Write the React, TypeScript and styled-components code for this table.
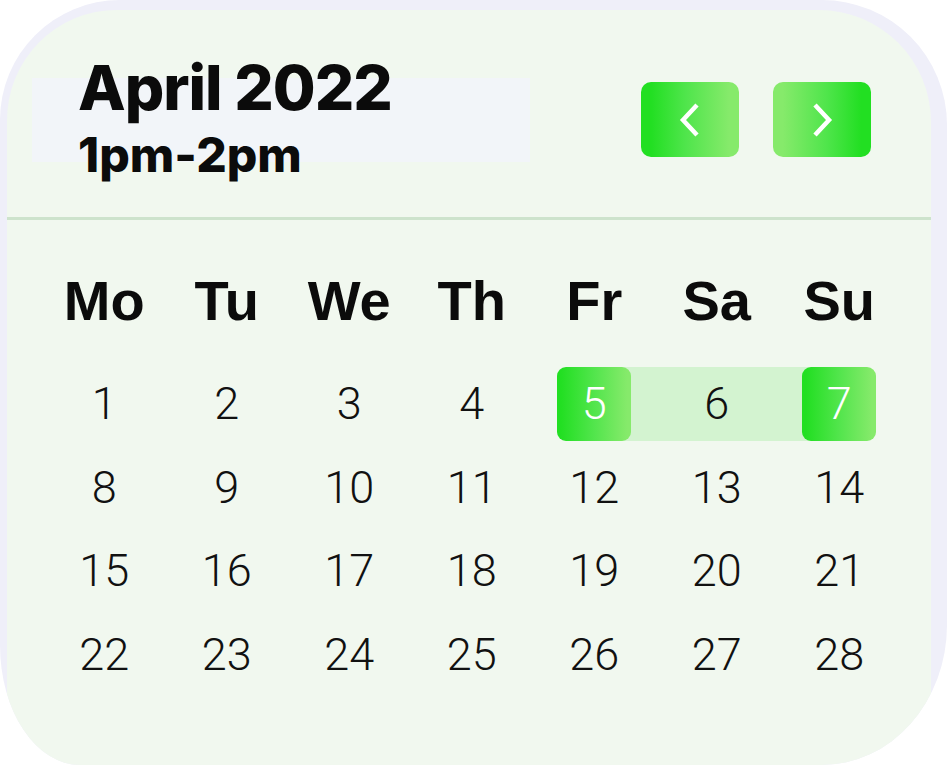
import React from "react";
import styled, { createGlobalStyle } from "styled-components";

const GlobalStyle = createGlobalStyle`
  html, body { margin: 0; padding: 0; background: #ffffff; }
  * { box-sizing: border-box; }
`;

const Frame = styled.div`
  width: 947px;
  height: 765px;
  background: #efeff9;
  border-radius: 120px 125px 125px 80px / 120px 125px 140px 120px;
  overflow: hidden;
  padding: 10px 16px 0 7px;
  display: flex;
`;

const Card = styled.div`
  flex: 1;
  background: #f1f8ef;
  border-radius: 110px 112px 0 0;
  display: flex;
  flex-direction: column;
`;

const Header = styled.div`
  height: 207px;
  display: flex;
  align-items: flex-start;
  justify-content: space-between;
  padding: 68px 60px 0 25px;
`;

const TitleBox = styled.div`
  width: 498px;
  height: 84px;
  background: #f2f5f9;
  padding-left: 46px;
`;

const Title = styled.div`
  margin-top: -25px;
  font-family: Inter, "Liberation Sans", sans-serif;
  font-weight: 800;
  font-size: 62px;
  line-height: 70px;
  letter-spacing: -1px;
  color: #0b0b0b;
`;

const Subtitle = styled.div`
  margin-top: 6px;
  font-family: Inter, "Liberation Sans", sans-serif;
  font-weight: 800;
  font-size: 48px;
  line-height: 52px;
  letter-spacing: 0;
  color: #0b0b0b;
`;

const NavGroup = styled.div`
  display: flex;
  gap: 34px;
  margin-top: 4px;
`;

const NavButton = styled.button<{ $dir: "prev" | "next" }>`
  width: 98px;
  height: 75px;
  border: none;
  border-radius: 10px;
  padding: 0;
  display: flex;
  align-items: center;
  justify-content: center;
  cursor: pointer;
  background: ${(p) =>
    p.$dir === "prev"
      ? "linear-gradient(90deg, #22df22 10%, #4fe54b 45%, #86ea6b 90%)"
      : "linear-gradient(90deg, #86ea6b 10%, #4fe54b 55%, #22df22 90%)"};
`;

const Divider = styled.div`
  height: 3px;
  background: #cde3cc;
`;

const WeekRow = styled.div`
  display: grid;
  grid-template-columns: repeat(7, 122.5px);
  height: 84px;
  margin: 38px 0 0 36px;
`;

const WeekDay = styled.div`
  display: flex;
  align-items: center;
  justify-content: center;
  font-family: "Liberation Sans", Arial, sans-serif;
  font-weight: 700;
  font-size: 56px;
  color: #0b0b0b;
`;

const DayGrid = styled.div`
  display: grid;
  grid-template-columns: repeat(7, 122.5px);
  grid-auto-rows: 83.5px;
  margin: 20px 0 0 36px;
`;

type RangePos = "none" | "start" | "mid" | "end";

const DayCell = styled.div<{ $range: RangePos }>`
  position: relative;
  display: flex;
  align-items: center;
  justify-content: center;
  &::before {
    content: "";
    display: ${(p) => (p.$range === "none" ? "none" : "block")};
    position: absolute;
    top: 4.75px;
    bottom: 4.75px;
    left: ${(p) => (p.$range === "start" ? "50%" : "0")};
    right: ${(p) => (p.$range === "end" ? "50%" : "0")};
    background: #d3f3d0;
  }
`;

const DayNum = styled.div<{ $selected?: boolean }>`
  position: relative;
  width: 74px;
  height: 74px;
  border-radius: 9px;
  display: flex;
  align-items: center;
  justify-content: center;
  font-family: Roboto, "Liberation Sans", sans-serif;
  font-weight: 300;
  font-size: 45px;
  color: ${(p) => (p.$selected ? "#ffffff" : "#111111")};
  background: ${(p) =>
    p.$selected
      ? "linear-gradient(90deg, #22df22 5%, #52e54c 50%, #86ea6b 95%)"
      : "transparent"};
`;

const Chevron = ({ dir }: { dir: "left" | "right" }) => (
  <svg width="24" height="36" viewBox="0 0 24 36" fill="none">
    <polyline
      points={dir === "left" ? "19,3 5,18 19,33" : "5,3 19,18 5,33"}
      stroke="#ffffff"
      strokeWidth="4.5"
      strokeLinecap="butt"
      strokeLinejoin="miter"
    />
  </svg>
);

const days = ["Mo", "Tu", "We", "Th", "Fr", "Sa", "Su"];

function rangeOf(d: number): RangePos {
  if (d === 5) return "start";
  if (d === 6) return "mid";
  if (d === 7) return "end";
  return "none";
}

export default function App() {
  const nums = Array.from({ length: 28 }, (_, i) => i + 1);
  return (
    <>
      <GlobalStyle />
      <Frame>
        <Card>
          <Header>
            <TitleBox>
              <Title>April 2022</Title>
              <Subtitle>1pm-2pm</Subtitle>
            </TitleBox>
            <NavGroup>
              <NavButton $dir="prev" aria-label="Previous month">
                <Chevron dir="left" />
              </NavButton>
              <NavButton $dir="next" aria-label="Next month">
                <Chevron dir="right" />
              </NavButton>
            </NavGroup>
          </Header>
          <Divider />
          <WeekRow>
            {days.map((d) => (
              <WeekDay key={d}>{d}</WeekDay>
            ))}
          </WeekRow>
          <DayGrid>
            {nums.map((n) => (
              <DayCell key={n} $range={rangeOf(n)}>
                <DayNum $selected={n === 5 || n === 7}>{n}</DayNum>
              </DayCell>
            ))}
          </DayGrid>
        </Card>
      </Frame>
    </>
  );
}
